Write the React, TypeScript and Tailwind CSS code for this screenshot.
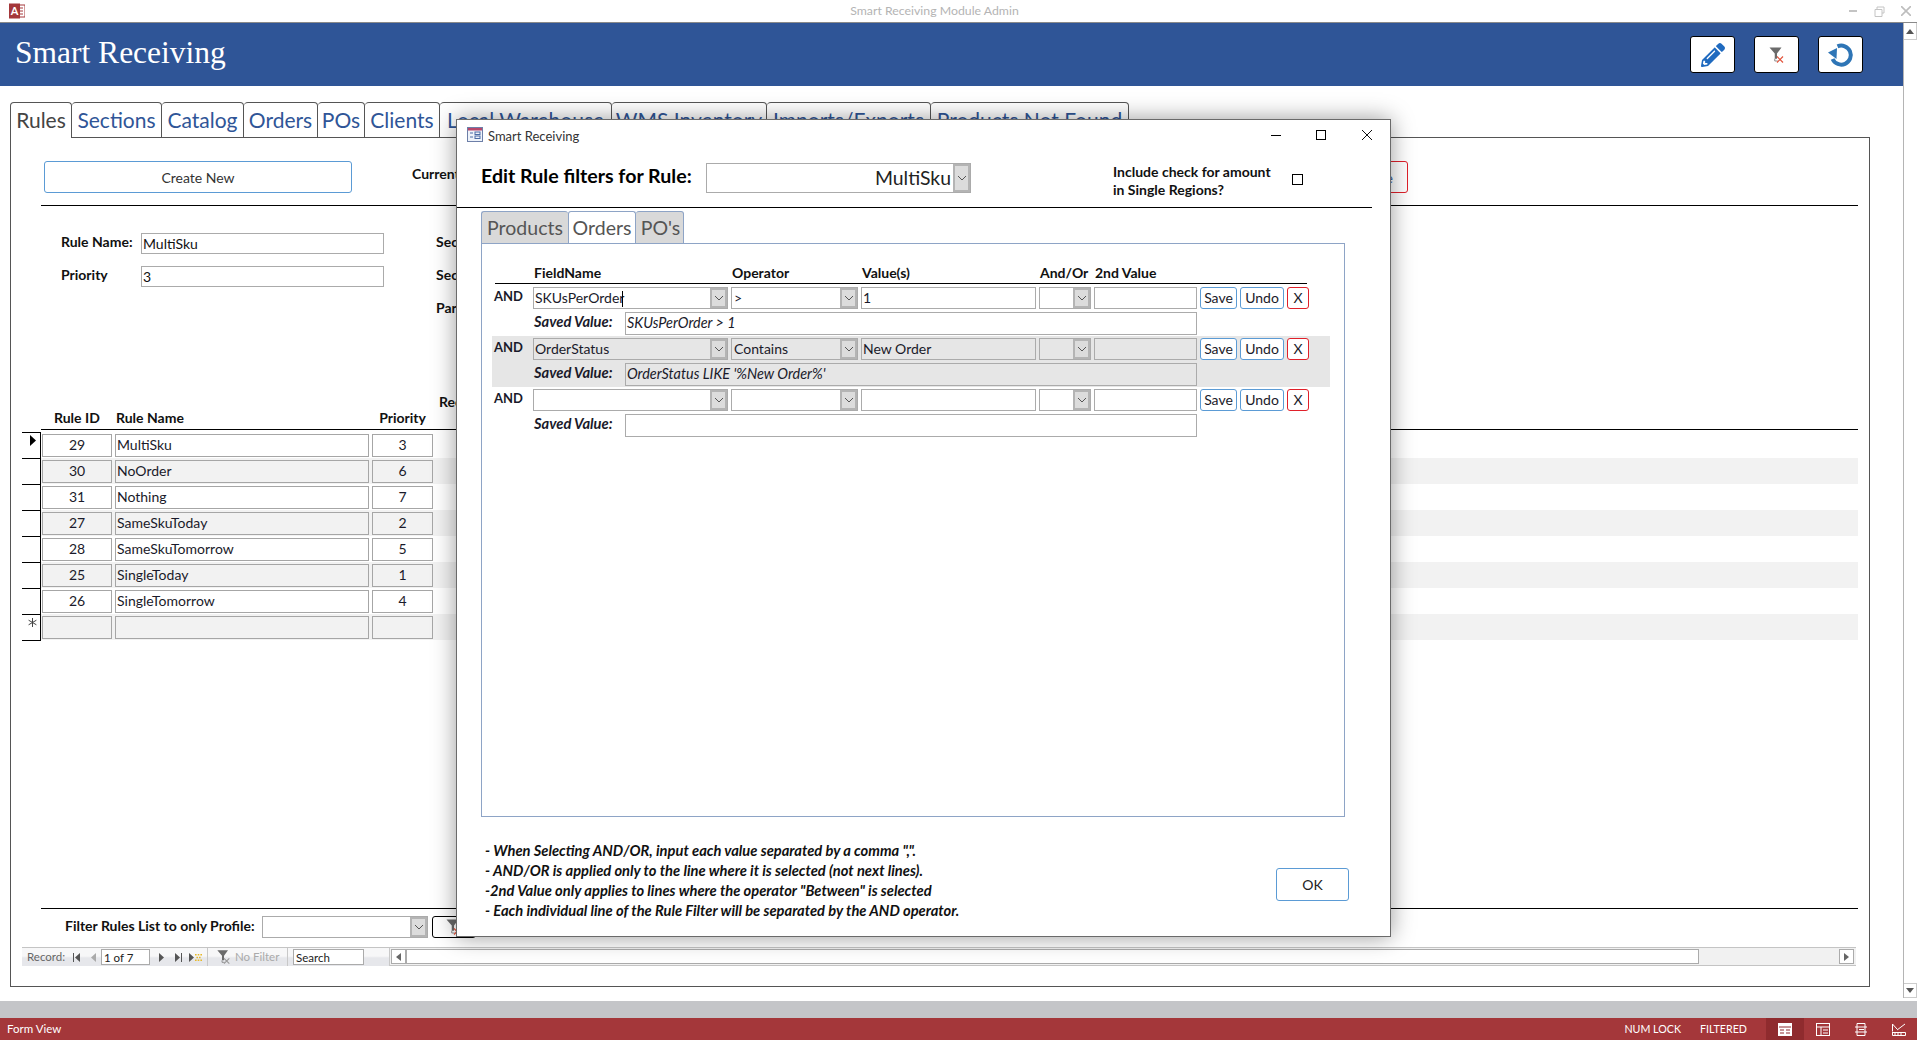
import React from "react";
import { FaPencilAlt } from "react-icons/fa";

const Chevron = () => (
  <svg width="10" height="6" viewBox="0 0 10 6" fill="none" stroke="#555" strokeWidth="1">
    <path d="M1 1l4 4 4-4" />
  </svg>
);

function Combo({ className, text, textClass = "" }: { className: string; text?: string; textClass?: string }) {
  return (
    <div className={`flex border border-[#ababab] ${className}`}>
      <div className={`flex-1 min-w-0 pl-[2px] truncate ${textClass}`}>{text}</div>
      <div className="w-[17px] border-2 border-[#b4b4b4] bg-[#dcdcdc] flex items-center justify-center shrink-0">
        <Chevron />
      </div>
    </div>
  );
}

function Funnel({ size = 24, x = "#e2533b" }: { size?: number; x?: string }) {
  return (
    <svg width={size} height={size} viewBox="0 0 24 24">
      <path d="M2 2h16l-6 8v7h-3v-7z" fill="#6b6b6b" />
      <path d="M9 17v3h4" stroke="#6b6b6b" strokeWidth="1" fill="none" />
      <path d="M12 14l8 8M20 14l-8 8" stroke={x} strokeWidth="1.6" />
    </svg>
  );
}

const RefreshIcon = () => (
  <svg width="28" height="28" viewBox="0 0 28 28" fill="none">
    <path d="M10.5 5.4A9.5 9.5 0 1 1 5.6 18" stroke="#2e75b6" strokeWidth="4" />
    <path d="M1 11.5l9-4.5-0.5 11z" fill="#2e75b6" />
  </svg>
);

const tabs = [
  ["Rules", "w-[62px] text-[#444] border-b-0"],
  ["Sections", "w-[90px] text-[#2f5597]"],
  ["Catalog", "w-[82px] text-[#2f5597]"],
  ["Orders", "w-[74px] text-[#2f5597]"],
  ["POs", "w-[47px] text-[#2f5597]"],
  ["Clients", "w-[75px] text-[#2f5597]"],
  ["Local Warehouse", "w-[172px] text-[#2f5597]"],
  ["WMS Inventory", "w-[155px] text-[#2f5597]"],
  ["Imports/Exports", "w-[164px] text-[#2f5597]"],
  ["Products Not Found", "w-[198px] text-[#2f5597]"],
];

const rules = [
  ["29", "MultiSku", "3"],
  ["30", "NoOrder", "6"],
  ["31", "Nothing", "7"],
  ["27", "SameSkuToday", "2"],
  ["28", "SameSkuTomorrow", "5"],
  ["25", "SingleToday", "1"],
  ["26", "SingleTomorrow", "4"],
  ["", "", ""],
];

function RuleRow({ row, i }: { row: string[]; i: number }) {
  const band = i % 2 === 1;
  return (
    <div className="flex h-[26px]">
      <div className="relative w-[19px] shrink-0 border-t border-r border-black">
        {i === 0 && (
          <svg className="absolute left-[8px] top-[2px]" width="6" height="11" viewBox="0 0 6 11">
            <path d="M0 0l6 5.5-6 5.5z" fill="#000" />
          </svg>
        )}
        {i === 7 && (
          <svg className="absolute left-[6px] top-[3px]" width="9" height="9" viewBox="0 0 9 9" stroke="#444" strokeWidth="1">
            <path d="M4.5 0v9M0.6 2.2l7.8 4.6M8.4 2.2L0.6 6.8" />
          </svg>
        )}
      </div>
      <div className={`flex-1 flex pt-[2px] text-[14px] leading-[19px] text-[#1a1a2a] ${band ? "bg-[#f2f2f2]" : ""}`}>
        <div className="ml-[1px] w-[70px] h-[23px] border border-[#a6a6a6] text-center">{row[0]}</div>
        <div className="ml-[3px] w-[254px] h-[23px] border border-[#a6a6a6] pl-[1px]">{row[1]}</div>
        <div className="ml-[3px] w-[61px] h-[23px] border border-[#a6a6a6] text-center">{row[2]}</div>
      </div>
    </div>
  );
}

function FilterRow({ field, op, value, saved, band, caret }: { field: string; op: string; value: string; saved: string; band?: boolean; caret?: boolean }) {
  return (
    <div className={`w-[838px] h-[51px] pl-[2px] pt-[2px] text-[14px] leading-[20px] text-[#1a1a2a] ${band ? "bg-[#e6e6e6]" : ""}`}>
      <div className="flex gap-[3px] h-[22px]">
        <div className="w-[36px] font-bold text-[13px] leading-[18px]">AND</div>
        <div className="flex w-[195px] border border-[#ababab]">
          <div className="flex-1 pl-[1px]">
            {field}
            {caret && <span className="inline-block w-px h-[16px] bg-black align-middle -ml-[2px]" />}
          </div>
          <div className="w-[17px] border-2 border-[#b4b4b4] bg-[#dcdcdc] flex items-center justify-center">
            <Chevron />
          </div>
        </div>
        <Combo className="w-[127px]" text={op} textClass="pl-[1px]" />
        <div className="w-[175px] border border-[#ababab] pl-[1px]">{value}</div>
        <Combo className="w-[52px]" />
        <div className="w-[103px] border border-[#ababab]" />
        <button className="w-[37px] rounded-[3px] border border-[#5b9bd5] bg-white text-center">Save</button>
        <button className="w-[44px] rounded-[3px] border border-[#5b9bd5] bg-white text-center">Undo</button>
        <button className="w-[22px] rounded-[3px] border border-[#e0202a] bg-white text-center">X</button>
      </div>
      <div className="flex mt-[3px] h-[23px]">
        <div className="w-[91px] ml-[40px] font-bold italic text-[14.7px] leading-[18px]">Saved Value:</div>
        <div className="w-[572px] border border-[#ababab] pl-[1px] italic text-[14.4px]">{saved}</div>
      </div>
    </div>
  );
}

function Modal() {
  return (
    <div className="absolute left-[456px] top-[119px] w-[935px] h-[818px] bg-white border border-[#6a6a6a] shadow-[0_0_22px_rgba(0,0,0,0.4)] flex flex-col text-[#111]">
      <div className="h-[28px] flex items-center pl-[10px] shrink-0">
        <svg width="16" height="15" viewBox="0 0 16 15">
          <rect x="0.5" y="0.5" width="15" height="14" fill="#eef3fa" stroke="#6d7fa8" />
          <rect x="1" y="1" width="14" height="2.5" fill="#b8476b" />
          <path d="M3 6h3M3 10h3" stroke="#4a6aa5" strokeWidth="1.2" />
          <rect x="8" y="5" width="5" height="2.5" fill="none" stroke="#4a6aa5" />
          <rect x="8" y="9" width="5" height="2.5" fill="none" stroke="#4a6aa5" />
        </svg>
        <div className="ml-[5px] mt-[4px] text-[13px] leading-[16px] text-[#333]">Smart Receiving</div>
        <div className="ml-auto mt-[2px] flex items-center">
          <div className="w-[10px] h-px bg-black" />
          <div className="ml-[35px] w-[10px] h-[10px] border border-black" />
          <svg className="ml-[36px] mr-[18px]" width="10" height="10" viewBox="0 0 10 10" stroke="#111" strokeWidth="1">
            <path d="M0 0l10 10M10 0L0 10" />
          </svg>
        </div>
      </div>
      <div className="h-[59px] shrink-0 flex items-center pl-[24px] pb-[3px]">
        <div className="w-[225px] font-bold text-[19.6px] leading-[24px] text-black whitespace-nowrap">Edit Rule filters for Rule:</div>
        <div className="mt-[4px] flex w-[265px] h-[30px] border border-[#ababab]">
          <div className="flex-1 text-right pr-[2px] text-[19.4px] leading-[28px] text-[#222]">MultiSku</div>
          <div className="w-[17px] border-2 border-[#b4b4b4] bg-[#dcdcdc] flex items-center justify-center">
            <Chevron />
          </div>
        </div>
        <div className="ml-[142px] mt-[10px] w-[179px] font-bold text-[14px] leading-[18px]">
          Include check for amount
          <br />
          in Single Regions?
        </div>
        <div className="mt-[7px] w-[11px] h-[11px] border border-black" />
      </div>
      <div className="h-[1px] bg-black mr-[18px] shrink-0" />
      <div className="mt-[3px] ml-[24px] flex h-[33px] shrink-0 text-[19.5px] leading-[32px] text-[#555]">
        <div className="w-[87px] bg-[#d9d9d9] border border-[#8ea4c6] border-r-0 rounded-t-[3px] text-center">Products</div>
        <div className="w-[68px] bg-white border-t border-x border-[#8ea4c6] rounded-t-[3px] text-center">Orders</div>
        <div className="w-[48px] bg-[#d9d9d9] border border-[#8ea4c6] border-l-0 rounded-t-[3px] pl-[2px] text-center">PO's</div>
      </div>
      <div className="-mt-px ml-[24px] w-[864px] h-[574px] border border-[#8ea4c6] shrink-0 pt-[19px] pl-[10px]">
        <div className="ml-[3px] w-[812px] h-[21px] border-b border-black flex font-bold text-[14px] leading-[19px] text-[#111]">
          <div className="ml-[39px] w-[198px]">FieldName</div>
          <div className="w-[130px]">Operator</div>
          <div className="w-[178px]">Value(s)</div>
          <div className="w-[55px]">And/Or</div>
          <div>2nd Value</div>
        </div>
        <div className="mt-[1px]">
          <FilterRow field="SKUsPerOrder" op=">" value="1" saved="SKUsPerOrder > 1" caret />
          <FilterRow field="OrderStatus" op="Contains" value="New Order" saved="OrderStatus LIKE '%New Order%'" band />
          <FilterRow field="" op="" value="" saved="" />
        </div>
      </div>
      <div className="flex flex-1">
        <div className="flex-1 mt-[23px] pl-[28px] font-bold italic text-[14.7px] leading-[20px] text-[#111]">
          <div>- When Selecting AND/OR, input each value separated by a comma ",".</div>
          <div>- AND/OR is applied only to the line where it is selected (not next lines).</div>
          <div>-2nd Value only applies to lines where the operator "Between" is selected</div>
          <div>- Each individual line of the Rule Filter will be separated by the AND operator.</div>
        </div>
        <button className="mt-[51px] mr-[41px] w-[73px] h-[33px] rounded-[3px] border border-[#5b9bd5] bg-white text-[14px] text-[#222]">OK</button>
      </div>
    </div>
  );
}

function Nav() {
  return (
    <div className="mt-[8px] h-[19px] flex items-stretch border-t border-[#c4c4c4] border-b-0 bg-[linear-gradient(#f7f7f8_0%,#f7f7f8_45%,#e6e7eb_55%,#e6e7eb_100%)] text-[11.5px] leading-[16px] text-[#666] w-[1834px]">
      <div className="w-[186px] flex items-center border-r border-[#c8c8c8]">
        <span className="ml-[5px] w-[41px]">Record:</span>
        <svg className="ml-[5px]" width="7" height="9" viewBox="0 0 7 9"><path d="M0 0h1v9H0zM7 0v9L2 4.5z" fill="#555" /></svg>
        <svg className="ml-[11px]" width="5" height="9" viewBox="0 0 5 9"><path d="M5 0v9L0 4.5z" fill="#aaa" /></svg>
        <div className="ml-[5px] w-[49px] h-[16px] border border-[#ababab] bg-white pl-[2px] text-[#222] leading-[15px]">1 of 7</div>
        <svg className="ml-[9px]" width="5" height="9" viewBox="0 0 5 9"><path d="M0 0v9l5-4.5z" fill="#555" /></svg>
        <svg className="ml-[11px]" width="7" height="9" viewBox="0 0 7 9"><path d="M0 0v9l5-4.5zM6 0h1v9H6z" fill="#555" /></svg>
        <svg className="ml-[7px]" width="13" height="9" viewBox="0 0 13 9">
          <path d="M0 0v9l5-4.5z" fill="#555" />
          <path d="M6 1h1.6v1.6H6zM8.7 1h1.6v1.6H8.7zM11.4 1H13v1.6h-1.6zM7.4 3.7H9v1.6H7.4zM10 3.7h1.6v1.6H10zM6 6.4h1.6V8H6zM8.7 6.4h1.6V8H8.7zM11.4 6.4H13V8h-1.6z" fill="#e8b928" />
        </svg>
      </div>
      <div className="w-[80px] flex items-center border-r border-[#c8c8c8] text-[#aaa]">
        <span className="ml-[8px]"><Funnel size={16} x="#999" /></span>
        <span className="ml-[3px]">No Filter</span>
      </div>
      <div className="w-[102px] flex items-center border-r border-[#c8c8c8]">
        <div className="ml-[5px] w-[71px] h-[16px] border border-[#ababab] bg-white pl-[2px] text-[#222] leading-[15px]">Search</div>
      </div>
      <div className="flex-1 flex items-center border-b border-[#c4c4c4] bg-[#f1f1f1]">
        <div className="ml-[1px] w-[15px] h-[15px] border border-[#ababab] bg-white flex items-center justify-center">
          <svg width="5" height="8" viewBox="0 0 5 8"><path d="M5 0v8L0 4z" fill="#666" /></svg>
        </div>
        <div className="w-[1293px] h-[15px] border border-[#ababab] bg-white" />
        <div className="ml-auto mr-[2px] w-[15px] h-[15px] border border-[#ababab] bg-white flex items-center justify-center">
          <svg width="5" height="8" viewBox="0 0 5 8"><path d="M0 0v8l5-4z" fill="#666" /></svg>
        </div>
      </div>
    </div>
  );
}

function Content() {
  return (
    <div className="ml-[10px] w-[1860px] h-[850px] border border-[#555] pl-[11px] pr-[11px] text-[#111] text-[14px] shrink-0 bg-white">
      <div className="flex items-start mt-[23px] h-[32px]">
        <button className="ml-[22px] w-[308px] h-[32px] rounded-[3px] border border-[#5b9bd5] bg-white text-[14px] text-[#333]">Create New</button>
        <div className="ml-[60px] w-[120px] font-bold text-[14px] leading-[26px]">Current Profile:</div>
        <button className="ml-[756px] w-[120px] h-[32px] rounded-[3px] border border-[#e0202a] bg-white text-right pr-[14px] text-[#2f5597]">Delete</button>
      </div>
      <div className="mt-[12px] ml-[19px] h-px bg-black" />
      <div className="mt-[27px] flex h-[22px] font-bold text-[14px] leading-[18px]">
        <div className="ml-[39px] w-[80px]">Rule Name:</div>
        <div className="w-[243px] h-[21px] border border-[#ababab] pl-[1px] font-normal text-[14px] leading-[20px]">MultiSku</div>
        <div className="ml-[52px]">Sections</div>
      </div>
      <div className="mt-[11px] flex h-[22px] font-bold text-[14px] leading-[18px]">
        <div className="ml-[39px] w-[80px]">Priority</div>
        <div className="w-[243px] h-[21px] border border-[#ababab] pl-[1px] font-normal text-[14px] leading-[20px]">3</div>
        <div className="ml-[52px]">Sections</div>
      </div>
      <div className="mt-[11px] flex h-[22px] font-bold text-[14px] leading-[18px]">
        <div className="ml-[414px]">Parts</div>
      </div>
      <div className="mt-[66px] ml-[19px] h-[43px] border-b border-black flex items-end pb-[2px] font-bold text-[14px] leading-[18px] text-[#111]">
        <div className="w-[73px] pl-[13px]">Rule ID</div>
        <div className="w-[256px] pl-[2px]">Rule Name</div>
        <div className="w-[65px] text-center">Priority</div>
        <div className="ml-[4px] mb-[16px]">Records</div>
      </div>
      <div className="mt-[2px]">
        {rules.map((r, i) => (
          <RuleRow key={i} row={r} i={i} />
        ))}
        <div className="w-[19px] h-px bg-black" />
      </div>
      <div className="mt-[267px] ml-[19px] h-px bg-black" />
      <div className="mt-[7px] flex h-[23px] font-bold text-[14px] leading-[20px]">
        <div className="ml-[43px] w-[197px] whitespace-nowrap">Filter Rules List to only Profile:</div>
        <Combo className="w-[166px] h-[22px]" />
        <button className="ml-[4px] w-[44px] h-[22px] rounded-[3px] border border-black bg-white flex items-center justify-center">
          <Funnel size={18} />
        </button>
      </div>
      <Nav />
    </div>
  );
}

export default function App() {
  return (
    <div className="relative w-[1917px] h-[1040px] overflow-hidden flex flex-col bg-white font-[Lato,sans-serif]">
      <div className="h-[23px] shrink-0 flex items-center border-b border-[#8a8a8a] relative">
        <svg className="ml-[9px]" width="16" height="16" viewBox="0 0 16 16">
          <rect x="6" y="2" width="10" height="12" fill="#fff" stroke="#a4373a" />
          <path d="M9 5h5M9 8h5M9 11h5" stroke="#a4373a" />
          <rect x="0" y="0.5" width="11" height="15" fill="#a4373a" />
          <text x="5.5" y="12" fontSize="11" fontWeight="700" textAnchor="middle" fill="#fff">A</text>
        </svg>
        <div className="flex-1 text-center text-[12.3px] text-[#b4b4b4] pr-[5px]">Smart Receiving Module Admin</div>
        <div className="w-[62px] mr-[6px] flex items-center justify-between text-[#bdbdbd]">
          <div className="w-[8px] h-[2px] bg-[#c4c4c4]" />
          <svg width="11" height="11" viewBox="0 0 11 11" fill="none" stroke="#c4c4c4"><path d="M3 3V1h7v6H8M1 3.5h7v7H1z" /></svg>
          <svg width="10" height="10" viewBox="0 0 10 10" stroke="#bdbdbd" strokeWidth="1.6"><path d="M0 0l10 10M10 0L0 10" /></svg>
        </div>
      </div>
      <div className="flex-1 flex min-h-0">
        <div className="flex-1 min-w-0 flex flex-col">
          <div className="h-[63px] shrink-0 bg-[#2f5597] flex items-center pl-[15px] pr-[40px]">
            <div className="font-['Liberation_Serif',serif] text-[31.5px] leading-[36px] pb-[4px] h-[40px] text-white">Smart Receiving</div>
            <div className="ml-auto flex gap-[19px]">
              <button className="w-[45px] h-[37px] rounded-[3px] border border-black bg-white flex items-center justify-center text-[#1f6abf]">
                <FaPencilAlt size={24} />
              </button>
              <button className="w-[45px] h-[37px] rounded-[3px] border border-black bg-white flex items-center justify-center">
                <Funnel size={18} />
              </button>
              <button className="w-[45px] h-[37px] rounded-[3px] border border-black bg-white flex items-center justify-center">
                <RefreshIcon />
              </button>
            </div>
          </div>
          <div className="mt-[16px] ml-[10px] flex h-[36px] -mb-px relative shrink-0">
            {tabs.map(([t, c]) => (
              <div key={t} className={`h-[36px] border border-l-0 first:border-l border-[#555] rounded-t-[4px] bg-white text-center text-[21px] leading-[34px] whitespace-nowrap ${c}`}>
                {t}
              </div>
            ))}
          </div>
          <Content />
        </div>
        <div className="w-[14px] shrink-0 h-[975px] border-l border-[#b4b4b4] flex flex-col justify-between">
          <div className="h-[17px] border border-l-0 border-t-0 border-[#ccc] flex items-center justify-center">
            <svg width="8" height="5" viewBox="0 0 8 5"><path d="M0 5l4-5 4 5z" fill="#555" /></svg>
          </div>
          <div className="h-[15px] border border-l-0 border-[#ccc] flex items-center justify-center">
            <svg width="8" height="5" viewBox="0 0 8 5"><path d="M0 0l4 5 4-5z" fill="#555" /></svg>
          </div>
        </div>
      </div>
      <div className="h-[17px] shrink-0 bg-[#c4c5c8]" />
      <div className="h-[22px] shrink-0 bg-[#a4373a] flex items-center pl-[7px] text-white text-[11.5px]">
        <div>Form View</div>
        <div className="ml-auto text-[10.7px]">NUM LOCK</div>
        <div className="ml-[19px] text-[10.7px]">FILTERED</div>
        <div className="ml-[19px] w-[38px] h-[22px] bg-[#8f2b2e] flex items-center justify-center">
          <svg width="14" height="13" viewBox="0 0 14 13"><rect width="14" height="13" fill="#fff" /><path d="M1 4h12M2 7h4M8 7h4M2 10h4M8 10h4" stroke="#8f2b2e" /></svg>
        </div>
        <div className="w-[37px] flex justify-center">
          <svg width="14" height="13" viewBox="0 0 14 13" fill="none" stroke="#fff"><rect x=".5" y=".5" width="13" height="12" /><path d="M1 4h12M5 4v8M7 7h5M7 10h5" /></svg>
        </div>
        <div className="w-[40px] flex justify-center">
          <svg width="12" height="13" viewBox="0 0 12 13" fill="none" stroke="#fff"><path d="M2 .5h8M2 12.5h8M2 .5v12M10 .5v12M0 4h12M0 9h12M4 6.5h5" /></svg>
        </div>
        <div className="w-[36px] flex justify-center">
          <svg width="14" height="13" viewBox="0 0 14 13" fill="none" stroke="#fff"><path d="M.5 8.5v4h13v-3H1M3 10v2M6 10v2M9 10v2M.5 8L.5 1 5 6M5 7l8-6" /></svg>
        </div>
      </div>
      <Modal />
    </div>
  );
}
